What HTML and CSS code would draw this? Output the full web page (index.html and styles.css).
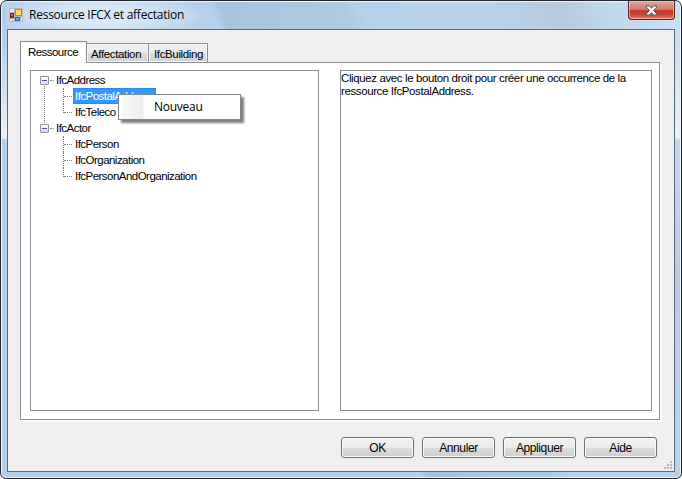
FILE: index.html
```html
<!DOCTYPE html>
<html lang="fr">
<head>
    <meta charset="UTF-8">
    <meta name="viewport" content="width=device-width, initial-scale=1.0">
    <title>Ressource IFCX et affectation</title>
    <link rel="stylesheet" href="styles.css">
</head>
<body>
    <div class="window">
        <div class="titleBar">
            <svg class="appIcon" width="14" height="14" viewBox="0 0 14 14" shape-rendering="crispEdges">
                <rect x="0" y="0" width="14" height="14" fill="#b4b9c1"/>
                <rect x="1" y="1" width="4" height="3" fill="#e2e7ee"/>
                <rect x="1" y="11" width="2" height="2" fill="#e2e7ee"/>
                <rect x="4" y="11" width="1" height="2" fill="#e2e7ee"/>
                <rect x="12" y="9" width="1" height="4" fill="#e2e7ee"/>
                <rect x="1" y="5" width="4" height="5" fill="#a31510"/>
                <rect x="2" y="6" width="2" height="2" fill="#e0564a"/>
                <rect x="6" y="1" width="7" height="7" fill="#c98a10"/>
                <rect x="7" y="2" width="5" height="5" fill="#ffd85c"/>
                <rect x="6" y="9" width="5" height="4" fill="#2a5fc4"/>
                <rect x="7" y="10" width="3" height="2" fill="#6fa3f2"/>
            </svg>
            <span class="titleText">Ressource IFCX et affectation</span>
            <button class="closeButton" aria-label="Fermer">
                <svg width="13" height="11" viewBox="0 0 13 11">
                    <path d="M1.500 1h3l2 2.300L8.500 1h3v1.200L8.600 5.500l2.900 3.300V10h-3L6.500 7.700 4.500 10h-3V8.800L4.400 5.500 1.500 2.200z" fill="#fff" stroke="#545a68" stroke-width="1"/>
                </svg>
            </button>
        </div>

        <div class="client">
            <div class="tabs">
                <div class="tab active"><span>Ressource</span></div>
                <div class="tab tabAffectation"><span>Affectation</span></div>
                <div class="tab tabBuilding"><span>IfcBuilding</span></div>
            </div>
            <div class="tabPage">
                <div class="tree">
                    <div class="node open"><i class="toggle"></i><span class="label">IfcAddress</span></div>
                    <div class="node child"><span class="label selected">IfcPostalAddress</span></div>
                    <div class="node child last"><span class="label">IfcTeleco</span></div>
                    <div class="node"><i class="toggle"></i><span class="label">IfcActor</span></div>
                    <div class="node child"><span class="label">IfcPerson</span></div>
                    <div class="node child"><span class="label">IfcOrganization</span></div>
                    <div class="node child last"><span class="label">IfcPersonAndOrganization</span></div>
                    <div class="contextMenu"><span>Nouveau</span></div>
                </div>
                <div class="info">
                    Cliquez avec le bouton droit pour créer une occurrence de la<br>
                    ressource IfcPostalAddress.
                </div>
            </div>
            <div class="buttonGroup">
                <button class="button">OK</button>
                <button class="button">Annuler</button>
                <button class="button">Appliquer</button>
                <button class="button">Aide</button>
            </div>
            <svg class="grip" width="8" height="8" viewBox="0 0 8 8" shape-rendering="crispEdges" fill="#b8b8b8">
                <path d="M6 0h2v2h-2zM3 3h2v2h-2zM6 3h2v2h-2zM0 6h2v2h-2zM3 6h2v2h-2zM6 6h2v2h-2z"/>
            </svg>
        </div>
    </div>
</body>
</html>
```
FILE: styles.css
```css
* {
    margin: 0;
    padding: 0;
    box-sizing: border-box;
}
body {
    width: 682px;
    height: 479px;
    overflow: hidden;
    background: white;
    font-family: "Liberation Sans", Arial, sans-serif;
    font-size: 11.5px;
    color: black;
}
.window {
    width: 682px;
    height: 479px;
    padding: 0 6px 6px;
    border: 1px solid #24252d;
    border-radius: 7px 7px 6px 6px;
    box-shadow: inset 0 0 0 1px #edf6fd;
    background:
        linear-gradient(to bottom, rgba(240, 244, 250, 0) 40px, rgba(240, 244, 250, 0.9) 137px, rgba(240, 244, 250, 0) 139px),
        linear-gradient(66deg, #b5d0ec 0 47%, #a8c3de 48%, #adcae3 62%, #b6d1ec 64%, #b8d2eb 78%, #b7cae0 86%, #bdd4ea 90%, #c8dff2 97%);
}

/* Barre de titre */
.titleBar {
    display: flex;
    height: 28px;
    padding: 0 0 0 2px;
    background: radial-gradient(ellipse 110px 22px at 92px 15px, rgba(235, 244, 252, 0.65) 40%, rgba(235, 244, 252, 0) 100%);
}
.appIcon {
    margin-top: 7px;
}
.titleText {
    margin: 6px 0 0 6px;
    font-family: "Open Sans", "Noto Sans", sans-serif;
    font-size: 12px;
    line-height: 16px;
    letter-spacing: -0.24px;
    white-space: nowrap;
}
.closeButton {
    display: flex;
    align-items: center;
    justify-content: center;
    width: 47px;
    height: 19px;
    margin-left: auto;
    border: 1px solid #5c1f23;
    border-top: none;
    border-radius: 0 0 4px 4px;
    box-shadow: inset 0 0 0 1px rgba(255, 210, 200, 0.6);
    background: linear-gradient(#e2a197, #d27a6c 47%, #b93c2a 50%, #c8432e 75%, #e08068);
}

.client {
    position: relative;
    height: 443px;
    padding: 11px 14px 0 12px;
    border: 1px solid #5c6b79;
    background: #efefef;
}

/* Onglets */
.tabs {
    display: flex;
    align-items: flex-end;
    height: 21px;
}
.tab {
    height: 19px;
    margin-left: -1px;
    padding: 3px 0 0 4px;
    border: 1px solid #8b8d96;
    border-bottom: none;
    box-shadow: inset 0 0 0 1px #f7f7f7;
    background: linear-gradient(#f2f2f2, #ebebeb 50%, #dcdcdc 52%, #d2d2d2);
    line-height: 15px;
    letter-spacing: -0.36px;
    white-space: nowrap;
}
.tab.active {
    z-index: 1;
    width: 67px;
    height: 22px;
    margin: 0 0 -1px;
    padding-left: 7px;
    background: white;
    letter-spacing: -0.55px;
}
.tabAffectation {
    width: 63px;
}
.tabBuilding {
    width: 60px;
    padding-left: 5px;
}
.tabPage {
    display: flex;
    justify-content: space-between;
    width: 640px;
    height: 358px;
    padding: 7px 7px 8px 9px;
    border: 1px solid #8b8d96;
    box-shadow: 2px 2px 0 white;
    background: white;
}
.tree,
.info {
    height: 341px;
    border: 1px solid #8b8d96;
}

/* Arborescence */
.tree {
    position: relative;
    width: 289px;
    padding: 1px 0 0 9px;
}
.node {
    position: relative;
    display: flex;
    height: 16px;
    padding-left: 15px;
    line-height: 16px;
    letter-spacing: -0.53px;
    white-space: nowrap;
}
.node.child {
    padding-left: 33px;
}
.toggle {
    position: absolute;
    top: 4px;
    left: 0;
    width: 9px;
    height: 9px;
    border: 1px solid #949494;
    border-radius: 1px;
    background: linear-gradient(#3f5aa0, #3f5aa0) center / 5px 1px no-repeat, linear-gradient(white, #dcdcdc);
}
/* Lignes pointillées */
.node::before {
    content: "";
    position: absolute;
    top: 8px;
    left: 10px;
    width: 4px;
    border-top: 1px dotted #808080;
}
.node.child::before {
    left: 24px;
    width: 8px;
}
.node.child::after {
    content: "";
    position: absolute;
    top: 0;
    left: 23px;
    height: 16px;
    border-left: 1px dotted #808080;
}
.node.last::after {
    height: 9px;
}
.node.open::after {
    content: "";
    position: absolute;
    top: 14px;
    left: 4px;
    height: 37px;
    border-left: 1px dotted #808080;
}
.label {
    padding: 0 1px;
}
.child .label {
    padding-left: 2px;
}
.label.selected {
    width: 83px;
    background: #3399ff;
    outline: 1px dotted #b85f00;
    outline-offset: -1px;
    color: white;
}
.contextMenu {
    position: absolute;
    z-index: 2;
    top: 23px;
    left: 87px;
    width: 123px;
    height: 26px;
    padding-left: 35px;
    border: 1px solid #868686;
    box-shadow: 3px 3px 2px rgba(0, 0, 0, 0.5);
    background: linear-gradient(to right, white 2px, #f8f8f8 3px, #ededed 24px, white 25px);
    font-family: "Open Sans", "Noto Sans", sans-serif;
    font-size: 12px;
    line-height: 24px;
    letter-spacing: -0.25px;
}

.info {
    width: 312px;
    padding-top: 1px;
    line-height: 13px;
    letter-spacing: -0.39px;
    white-space: nowrap;
}

/* Boutons du bas */
.buttonGroup {
    display: flex;
    justify-content: flex-end;
    gap: 8px;
    margin-top: 17px;
    padding-right: 3px;
}
.button {
    width: 73px;
    height: 21px;
    border: 1px solid #707070;
    border-radius: 3px;
    box-shadow: inset 0 0 0 1px #fafafa;
    background: linear-gradient(#f2f2f2, #ebebeb 50%, #dddddd 51%, #cfcfcf);
    font-family: "Liberation Sans", Arial, sans-serif;
    font-size: 12px;
    letter-spacing: -0.4px;
}
.grip {
    position: absolute;
    right: 2px;
    bottom: 2px;
}
```
